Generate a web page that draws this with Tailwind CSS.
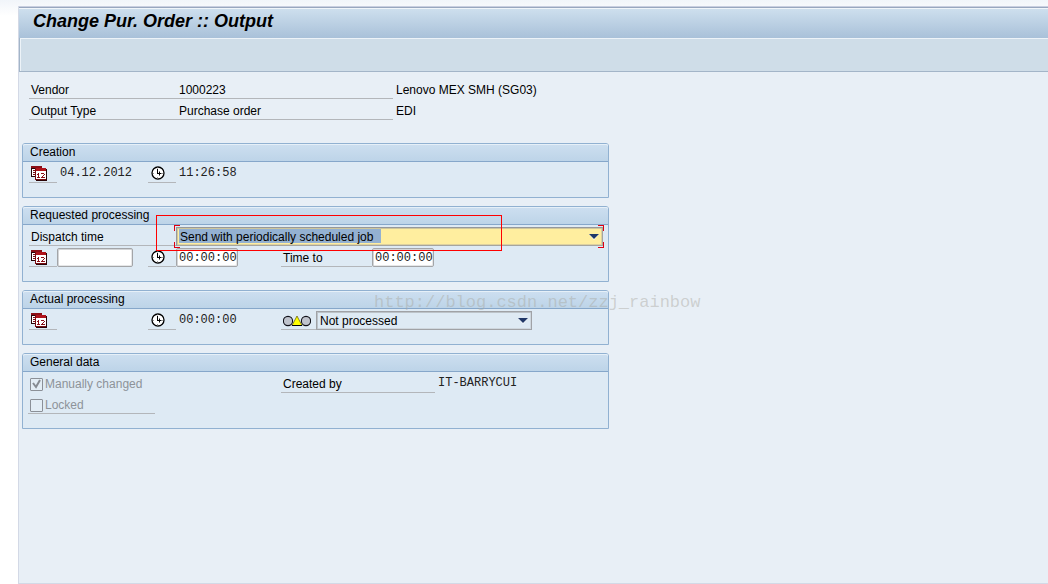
<!DOCTYPE html>
<html lang="en">
<head>
  <meta charset="UTF-8" />
  <title>Change Pur. Order :: Output</title>
  <script src="https://cdn.jsdelivr.net/npm/@tailwindcss/browser@4"></script>
</head>
<body class="min-h-screen flex flex-col bg-white bg-linear-to-b from-[#f1f5fa] to-white to-[16px] pt-[6px] pl-[18px] font-['Liberation_Sans',Arial,sans-serif] text-[12px] leading-[16px] text-black">

  <!-- Icons -->
  <svg class="hidden">
    <symbol id="calendar" viewBox="0 0 16 16" shape-rendering="crispEdges">
      <path d="M0 1h11v11H0z" fill="#2a0406" />
      <path d="M0 1h11v2H0z" fill="#8b0f16" />
      <path d="M1 4h3v7H1z" fill="#fff" />
      <path d="M2 5h2v1H2zM2 7h2v1H2zM2 9h2v1H2z" fill="#7a1015" />
      <path d="M4 3h11v12H4z" fill="#7a0b11" />
      <path d="M5 3h10v3H5z" fill="#b0141c" />
      <path d="M15 4h1v12H5v-1h10z" fill="#2a0406" />
      <path d="M5 6h10v8H5z" fill="#fff" />
      <path d="M7 8h1v5H7zM6 9h1v1H6zM6 12h3v1H6zM10 8h3v1h-3zM13 9h1v1h-1zM12 10h1v1h-1zM11 11h1v1h-1zM10 12h4v1h-4z" fill="#8b0f16" />
    </symbol>
    <symbol id="clock" viewBox="0 0 14 14">
      <circle cx="7" cy="7" r="6" fill="#fff" stroke="#000" stroke-width="1.3" />
      <path d="M6.500 3v5M6 7.500h4.500" fill="none" stroke="#000" />
      <path d="M8.500 5.500v4" stroke="#000" />
      <path d="M6.500 1.500v1M6.500 11v1.500M2 7.500h1M11 7.500h1" stroke="#999" />
    </symbol>
    <symbol id="lights" viewBox="0 0 28 12">
      <circle cx="5" cy="6" r="4.600" fill="#bfc3cc" stroke="#101018" stroke-width="1.1" />
      <circle cx="23" cy="6" r="4.600" fill="#bfc3cc" stroke="#101018" stroke-width="1.1" />
      <path d="M14 1l5 9.500H9z" fill="#ff0" stroke="#5a5200" stroke-width=".7" />
      <path d="M9 10.500h10" stroke="#000" />
    </symbol>
  </svg>

  <main class="relative grow flex flex-col bg-[#e8eff6] border-l border-b border-[#d3d9e6]">

    <!-- Title bar -->
    <h1 class="h-8 border-t border-[#c9cfe0] bg-linear-to-b from-[#d0e1ef] to-[#a9c1d9] shadow-[inset_0_1px_0_#98a7bf,inset_0_2px_0_#f0f5fa] pl-[14px] text-[18px] leading-[29px] font-bold italic">Change Pur. Order :: Output</h1>
    <div class="h-[34px] bg-[#cfdde8] border-l border-b border-[#a3b5c8] shadow-[inset_1px_1px_0_#edf3f8]"></div>

    <!-- Document header -->
    <dl class="mt-[6px] ml-[10px] grid grid-cols-[147px_217px_1fr]">
      <dt class="h-[21px] border-b border-[#b3b6ba] pt-[4px] pl-[2px]">Vendor</dt>
      <dd class="h-[21px] border-b border-[#b3b6ba] pt-[4px] pl-[3px]">1000223</dd>
      <dd class="h-[21px] pt-[4px] pl-[3px]">Lenovo MEX SMH (SG03)</dd>
      <dt class="h-[21px] border-b border-[#b3b6ba] pt-[4px] pl-[2px]">Output Type</dt>
      <dd class="h-[21px] border-b border-[#b3b6ba] pt-[4px] pl-[3px]">Purchase order</dd>
      <dd class="h-[21px] pt-[4px] pl-[3px]">EDI</dd>
    </dl>

    <div class="mt-[23px] ml-[3px] max-w-[587px] flex flex-col gap-2">

      <!-- Creation -->
      <section class="border border-[#91b1d1] rounded-t-[3px] bg-[#deeaf4] pb-[14px]">
        <h2 class="h-[18px] rounded-t-[2px] border-b border-[#86a7ca] bg-linear-to-b from-[#cddff0] to-[#bdd4e8] shadow-[inset_0_1px_0_#e6f0f8] pl-[7px]">Creation</h2>
        <div class="h-[21px] pl-[6px] grid grid-cols-[28px_91px_28px_105px_1fr]">
          <span class="border-b border-[#b3b6ba] pt-[3px] pl-[2px]"><svg class="size-4"><use href="#calendar" /></svg></span>
          <span class="pt-[3px] pl-[3px] font-['Liberation_Mono',monospace] text-[#222]">04.12.2012</span>
          <span class="border-b border-[#b3b6ba] pt-[4px] pl-[3px]"><svg class="size-[14px]"><use href="#clock" /></svg></span>
          <span class="pt-[3px] pl-[3px] font-['Liberation_Mono',monospace] text-[#222]">11:26:58</span>
        </div>
      </section>

      <!-- Requested processing -->
      <section class="relative border border-[#91b1d1] rounded-t-[3px] bg-[#deeaf4] pb-[14px]">
        <h2 class="h-[18px] rounded-t-[2px] border-b border-[#86a7ca] bg-linear-to-b from-[#cddff0] to-[#bdd4e8] shadow-[inset_0_1px_0_#e6f0f8] pl-[7px]">Requested processing</h2>
        <div class="h-[21px] pl-[6px] pr-[5px] grid grid-cols-[147px_1fr]">
          <label for="dispatch" class="border-b border-[#b3b6ba] pt-[4px] pl-[2px]">Dispatch time</label>
          <div class="relative pt-[2px]">
            <select id="dispatch" class="appearance-none block w-full h-[19px] border border-t-[#96989b] border-l-[#96989b] border-b-[#a5a59f] border-r-[#a5a59f] shadow-[inset_1px_1px_0_#cfc69c,inset_-1px_-1px_0_#ddd1a0] bg-[#ffee9f] bg-linear-to-r from-[#94b1d1] to-[#94b1d1] bg-size-[202px_14px] bg-position-[2px_1px] bg-no-repeat pl-[3px] leading-[16px]">
              <option>Send with periodically scheduled job</option>
            </select>
            <svg class="pointer-events-none absolute right-[4px] top-[9px] w-[10px] h-[6px]" viewBox="0 0 10 6"><path d="M0 0h10L5 6z" fill="#fff" /><path d="M0 0h10L5 5z" fill="#203868" /></svg>
            <span class="absolute -left-[2px] top-0 w-[6px] h-[6px] border-l border-t border-[#e00010]"></span>
            <span class="absolute -left-[2px] top-[17px] w-[6px] h-[6px] border-l border-b border-[#e00010]"></span>
            <span class="absolute -right-px top-0 w-[6px] h-[6px] border-r border-t border-[#e00010]"></span>
            <span class="absolute -right-px top-[17px] w-[6px] h-[6px] border-r border-b border-[#e00010]"></span>
          </div>
        </div>
        <div class="h-[21px] pl-[6px] grid grid-cols-[28px_91px_28px_105px_91px_1fr]">
          <label for="reqDate" class="border-b border-[#b3b6ba] pt-[3px] pl-[2px]"><svg class="size-4" role="img" aria-label="Date"><use href="#calendar" /></svg></label>
          <input id="reqDate" type="text" class="mt-[2px] w-[76px] h-[19px] border border-[#a3a5a8] shadow-[inset_1px_1px_0_#d3d5d7,inset_-1px_-1px_0_#e6e7e8] rounded-[2px] bg-white px-[2px]" />
          <label for="reqTime" class="border-b border-[#b3b6ba] pt-[4px] pl-[3px]"><svg class="size-[14px]" role="img" aria-label="Time from"><use href="#clock" /></svg></label>
          <input id="reqTime" type="text" value="00:00:00" class="mt-[2px] w-[62px] h-[19px] border border-[#a3a5a8] shadow-[inset_1px_1px_0_#d3d5d7,inset_-1px_-1px_0_#e6e7e8] rounded-[2px] bg-white pl-[2px] font-['Liberation_Mono',monospace] text-[#222]" />
          <label for="timeTo" class="border-b border-[#b3b6ba] pt-[4px] pl-[2px]">Time to</label>
          <input id="timeTo" type="text" value="00:00:00" class="mt-[2px] w-[62px] h-[19px] border border-[#a3a5a8] shadow-[inset_1px_1px_0_#d3d5d7,inset_-1px_-1px_0_#e6e7e8] rounded-[2px] bg-white pl-[2px] font-['Liberation_Mono',monospace] text-[#222]" />
        </div>
        <!-- Highlight frame -->
        <div class="pointer-events-none absolute left-[133px] top-[8px] w-[346px] h-[36px] border border-[#f00]"></div>
      </section>

      <!-- Actual processing -->
      <section class="border border-[#91b1d1] rounded-t-[3px] bg-[#deeaf4] pb-[14px]">
        <h2 class="h-[18px] rounded-t-[2px] border-b border-[#86a7ca] bg-linear-to-b from-[#cddff0] to-[#bdd4e8] shadow-[inset_0_1px_0_#e6f0f8] pl-[7px]">Actual processing</h2>
        <div class="h-[21px] pl-[6px] grid grid-cols-[28px_91px_28px_105px_35px_216px]">
          <span class="border-b border-[#b3b6ba] pt-[3px] pl-[2px]"><svg class="size-4"><use href="#calendar" /></svg></span>
          <span></span>
          <span class="border-b border-[#b3b6ba] pt-[4px] pl-[3px]"><svg class="size-[14px]"><use href="#clock" /></svg></span>
          <span class="pt-[3px] pl-[3px] font-['Liberation_Mono',monospace] text-[#222]">00:00:00</span>
          <label for="status" class="border-b border-[#b3b6ba] pt-[6px] pl-[2px]"><svg class="w-[28px] h-[12px]" role="img" aria-label="Status"><use href="#lights" /></svg></label>
          <div class="relative pt-[2px]">
            <select id="status" class="appearance-none block w-full h-[19px] border border-[#a0a2a6] shadow-[inset_1px_1px_0_#bcc3c9,inset_-1px_-1px_0_#cfd7de] bg-[#deeaf4] pl-[3px] leading-[16px]">
              <option>Not processed</option>
            </select>
            <svg class="pointer-events-none absolute right-[4px] top-[9px] w-[10px] h-[6px]" viewBox="0 0 10 6"><path d="M0 0h10L5 6z" fill="#fff" /><path d="M0 0h10L5 5z" fill="#203868" /></svg>
          </div>
        </div>
      </section>

      <!-- General data -->
      <section class="border border-[#91b1d1] rounded-t-[3px] bg-[#deeaf4] pb-[14px]">
        <h2 class="h-[18px] rounded-t-[2px] border-b border-[#86a7ca] bg-linear-to-b from-[#cddff0] to-[#bdd4e8] shadow-[inset_0_1px_0_#e6f0f8] pl-[7px]">General data</h2>
        <div class="pl-[5px] grid grid-cols-[253px_154px_1fr]">
          <label class="relative h-[21px] flex items-center gap-[2px] pt-[3px] pl-[2px] text-[#8d9399]">
            <input type="checkbox" checked disabled class="appearance-none size-[13px] border border-[#8b9097] rounded-[1px] bg-[#e3edf5]" />
            <svg class="absolute left-[2px] top-[5px] size-[13px]" viewBox="0 0 13 13"><path d="M3 6l3 4 4-7" fill="none" stroke="#868b92" stroke-width="2" /></svg>
            Manually changed
          </label>
          <span class="h-[21px] border-b border-[#b3b6ba] pt-[4px] pl-[2px]">Created by</span>
          <span class="h-[21px] pt-[3px] pl-[3px] font-['Liberation_Mono',monospace] text-[#222]">IT-BARRYCUI</span>
          <label class="h-[21px] w-[127px] flex items-center gap-[2px] border-b border-[#b3b6ba] pt-[4px] pl-[2px] text-[#8d9399]">
            <input type="checkbox" disabled class="appearance-none size-[13px] border border-[#8b9097] rounded-[1px] bg-[#e3edf5]" />
            Locked
          </label>
        </div>
      </section>
    </div>

    <!-- Watermark -->
    <p class="pointer-events-none absolute left-[355px] top-[286px] font-['Liberation_Mono',monospace] text-[17px] leading-[22px] text-[#a8a8a0]/45">http://blog.csdn.net/zzj_rainbow</p>
  </main>

</body>
</html>
